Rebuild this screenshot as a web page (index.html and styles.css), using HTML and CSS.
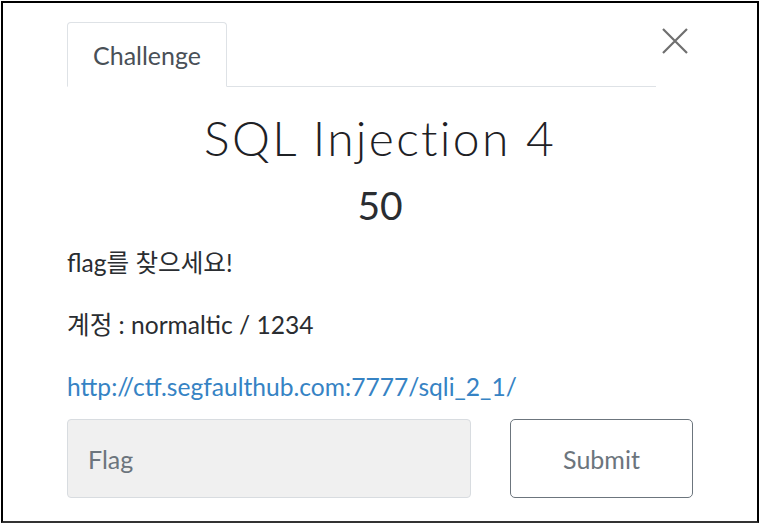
FILE: index.html
```html
<!DOCTYPE html>
<html lang="ko">
<head>
    <meta charset="UTF-8">
    <meta name="viewport" content="width=device-width, initial-scale=1.0">
    <title>SQL Injection 4</title>
    <link rel="stylesheet" href="styles.css">
</head>
<body>
    <div class="frame">
        <div class="modal-head">
            <ul class="nav-tabs">
                <li class="tab active">Challenge</li>
            </ul>
            <button class="close" aria-label="Close">
                <svg width="26" height="26" viewBox="0 0 26 26">
                    <path d="M1 1 L25 25 M25 1 L1 25" stroke="#6f6f6f" stroke-width="2.2" fill="none"/>
                </svg>
            </button>
        </div>

        <h3 class="challenge-name">SQL Injection 4</h3>
        <h4 class="challenge-value">50</h4>

        <div class="description">
            <p>flag를 찾으세요!</p>
            <p>계정 : normaltic / 1234</p>
            <p><a href="#">http://ctf.segfaulthub.com:7777/sqli_2_1/</a></p>
        </div>

        <form class="submit-row">
            <input class="flag-input" type="text" placeholder="Flag">
            <button class="submit-btn" type="button">Submit</button>
        </form>
    </div>
</body>
</html>
```

FILE: styles.css
```css
body {
    margin: 0;
    background-color: #fff;
    font-family: Lato, "Noto Sans CJK KR", sans-serif;
    color: #212529;
}

.frame {
    box-sizing: border-box;
    width: 758px;
    height: 522px;
    margin: 1px 0 0 1px;
    border: 2px solid #000;
    border-bottom-color: #333;
    padding: 19px 64px 0 64px;
}

.modal-head {
    display: flex;
    align-items: flex-start;
    justify-content: space-between;
}

.nav-tabs {
    display: flex;
    width: 589px;
    margin: 0;
    padding: 0;
    list-style: none;
    border-bottom: 1px solid #dee2e6;
}

.tab {
    box-sizing: border-box;
    width: 160px;
    height: 65px;
    margin-bottom: -1px;
    padding-top: 17px;
    text-align: center;
    font-size: 25px;
    line-height: 1.2;
    color: #495057;
    border: 1px solid #dee2e6;
    border-bottom-color: #fff;
    border-radius: 4px 4px 0 0;
}

.close {
    margin: 6px 5px 0 0;
    padding: 0;
    border: 0;
    background: none;
    line-height: 0;
}

.challenge-name {
    margin: 22px 0 0;
    text-align: center;
    font-size: 48px;
    font-weight: 300;
    line-height: 1.2;
    letter-spacing: 2.3px;
    color: #1e2125;
}

.challenge-value {
    margin: 15px 0 0;
    text-align: center;
    font-size: 39px;
    font-weight: 400;
    line-height: 1.2;
    color: #2a2d31;
}

.description {
    margin-top: 17px;
    font-size: 24.6px;
    color: #2a2d31;
}

.description p {
    margin: 0 0 26px;
    line-height: 36px;
}

.description p:last-child {
    margin-bottom: 0;
}

.description a {
    color: #3683c4;
    text-decoration: none;
}

.submit-row {
    display: flex;
    gap: 39px;
    margin-top: 14px;
}

.flag-input {
    box-sizing: border-box;
    width: 404px;
    height: 79px;
    padding: 0 20px;
    font-family: Lato, sans-serif;
    font-size: 25px;
    background-color: #f0f0f0;
    border: 1px solid #d8dce0;
    border-radius: 4px;
}

.flag-input::placeholder {
    color: #6c757d;
}

.submit-btn {
    box-sizing: border-box;
    width: 183px;
    height: 79px;
    font-family: Lato, sans-serif;
    font-size: 25px;
    color: #6c757d;
    background-color: #fff;
    border: 1.5px solid #6c757d;
    border-radius: 5px;
}
```
